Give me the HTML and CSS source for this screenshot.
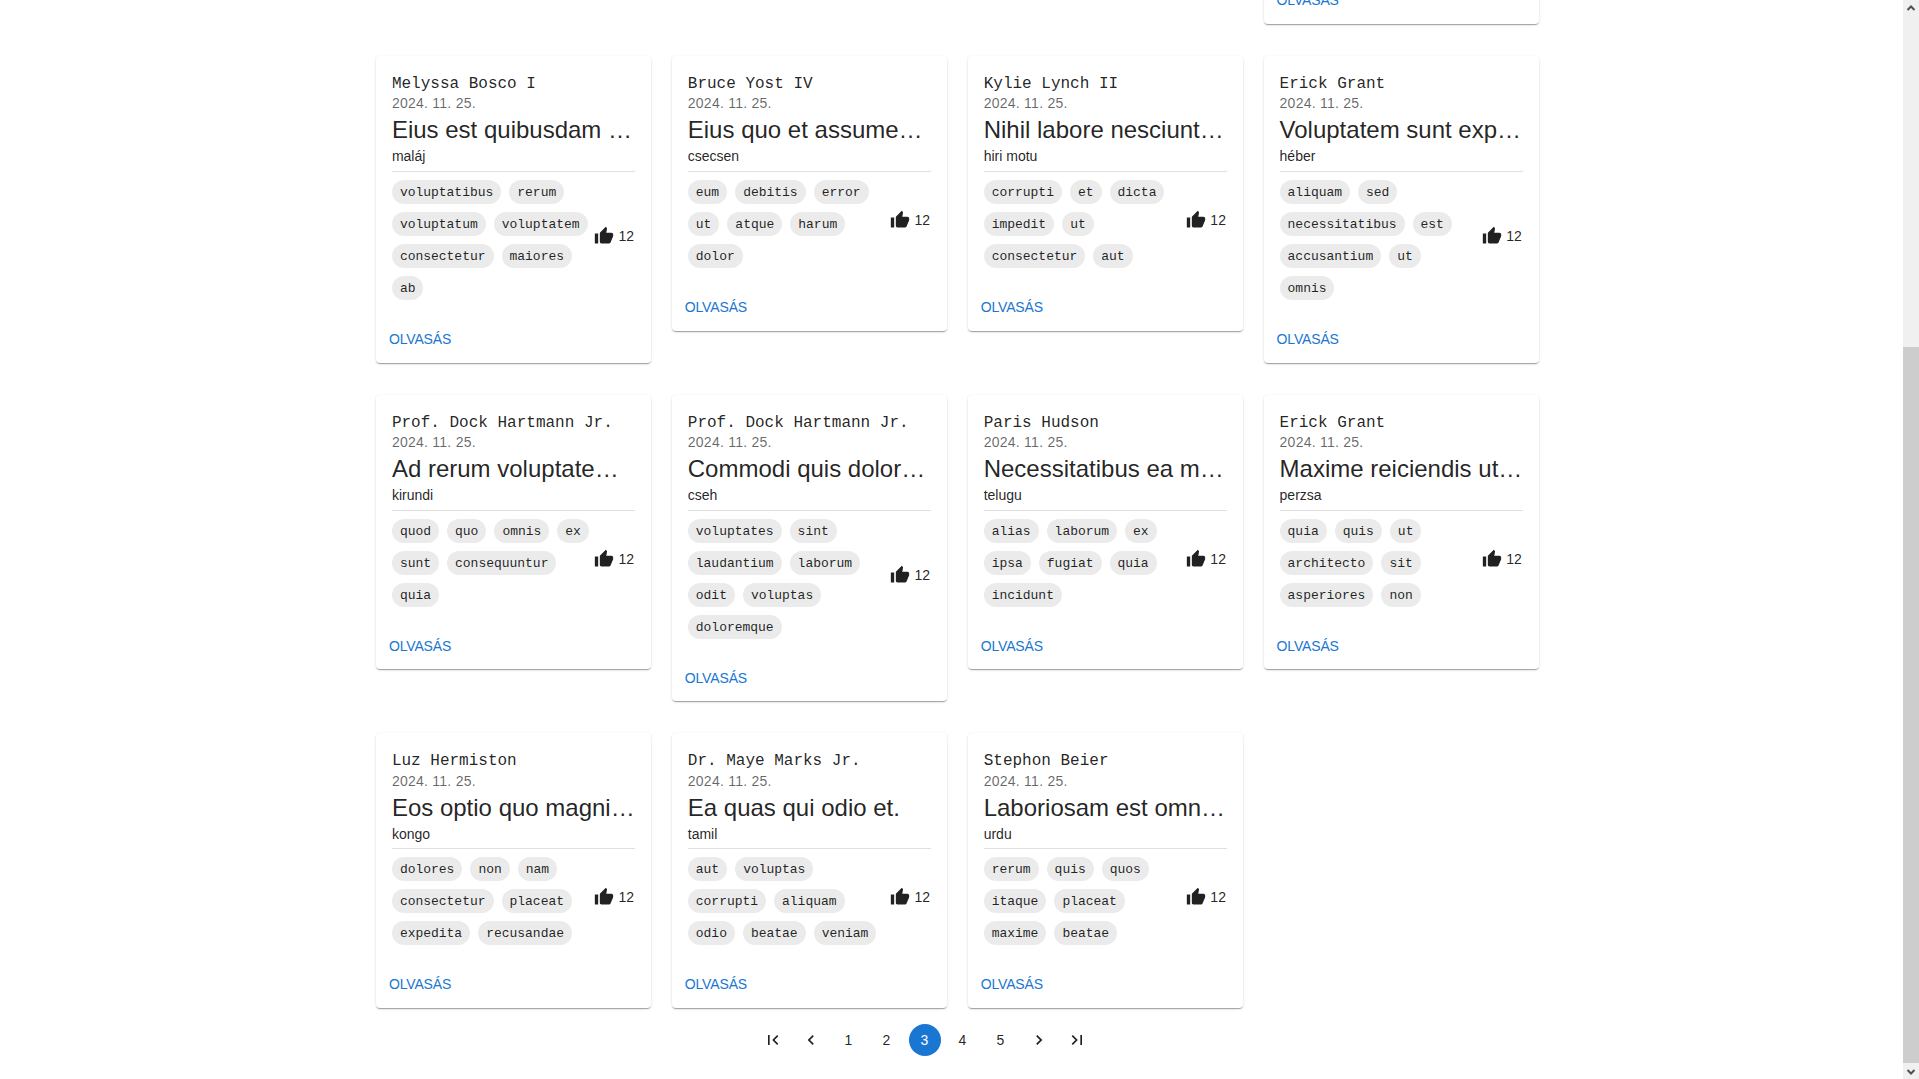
FILE: index.html
```html
<!DOCTYPE html>
<html lang="hu">
<head>
<meta charset="utf-8">
<title>Bejegyzések</title>
<link rel="stylesheet" href="styles.css">
</head>
<body>
<svg class="sprite" aria-hidden="true">
<symbol id="thumb" viewBox="0 0 24 24"><path d="M1 21h4V9H1v12zm22-11c0-1.1-.9-2-2-2h-6.31l.95-4.57.03-.32c0-.41-.17-.79-.44-1.06L14.17 1 7.59 7.59C7.22 7.95 7 8.45 7 9v10c0 1.1.9 2 2 2h9c.83 0 1.54-.5 1.84-1.22l3.02-7.05c.09-.23.14-.47.14-.73v-2z"/></symbol>
</svg>
<div class="window">
<main class="page">
<div class="grid">
<article class="card last-column"><div class="actions"><a class="read">OLVASÁS</a></div></article>

<article class="card"><div class="content"><div class="author">Melyssa Bosco I</div><div class="date">2024. 11. 25.</div><h2 class="title">Eius est quibusdam …</h2><div class="language">maláj</div>
<div class="meta"><div class="chips"><span class="chip">voluptatibus</span><span class="chip">rerum</span><span class="chip">voluptatum</span><span class="chip">voluptatem</span><span class="chip">consectetur</span><span class="chip">maiores</span><span class="chip">ab</span></div><div class="likes"><svg class="icon"><use href="#thumb"/></svg><span>12</span></div></div></div><div class="actions"><a class="read">OLVASÁS</a></div></article>

<article class="card"><div class="content"><div class="author">Bruce Yost IV</div><div class="date">2024. 11. 25.</div><h2 class="title">Eius quo et assume…</h2><div class="language">csecsen</div>
<div class="meta"><div class="chips"><span class="chip">eum</span><span class="chip">debitis</span><span class="chip">error</span><span class="chip">ut</span><span class="chip">atque</span><span class="chip">harum</span><span class="chip">dolor</span></div><div class="likes"><svg class="icon"><use href="#thumb"/></svg><span>12</span></div></div></div><div class="actions"><a class="read">OLVASÁS</a></div></article>

<article class="card"><div class="content"><div class="author">Kylie Lynch II</div><div class="date">2024. 11. 25.</div><h2 class="title">Nihil labore nesciunt…</h2><div class="language">hiri motu</div>
<div class="meta"><div class="chips"><span class="chip">corrupti</span><span class="chip">et</span><span class="chip">dicta</span><span class="chip">impedit</span><span class="chip">ut</span><span class="chip">consectetur</span><span class="chip">aut</span></div><div class="likes"><svg class="icon"><use href="#thumb"/></svg><span>12</span></div></div></div><div class="actions"><a class="read">OLVASÁS</a></div></article>

<article class="card"><div class="content"><div class="author">Erick Grant</div><div class="date">2024. 11. 25.</div><h2 class="title">Voluptatem sunt exp…</h2><div class="language">héber</div>
<div class="meta"><div class="chips"><span class="chip">aliquam</span><span class="chip">sed</span><span class="chip">necessitatibus</span><span class="chip">est</span><span class="chip">accusantium</span><span class="chip">ut</span><span class="chip">omnis</span></div><div class="likes"><svg class="icon"><use href="#thumb"/></svg><span>12</span></div></div></div><div class="actions"><a class="read">OLVASÁS</a></div></article>

<article class="card"><div class="content"><div class="author">Prof. Dock Hartmann Jr.</div><div class="date">2024. 11. 25.</div><h2 class="title">Ad rerum voluptate…</h2><div class="language">kirundi</div>
<div class="meta"><div class="chips"><span class="chip">quod</span><span class="chip">quo</span><span class="chip">omnis</span><span class="chip">ex</span><span class="chip">sunt</span><span class="chip">consequuntur</span><span class="chip">quia</span></div><div class="likes"><svg class="icon"><use href="#thumb"/></svg><span>12</span></div></div></div><div class="actions"><a class="read">OLVASÁS</a></div></article>

<article class="card"><div class="content"><div class="author">Prof. Dock Hartmann Jr.</div><div class="date">2024. 11. 25.</div><h2 class="title">Commodi quis dolor…</h2><div class="language">cseh</div>
<div class="meta"><div class="chips"><span class="chip">voluptates</span><span class="chip">sint</span><span class="chip">laudantium</span><span class="chip">laborum</span><span class="chip">odit</span><span class="chip">voluptas</span><span class="chip">doloremque</span></div><div class="likes"><svg class="icon"><use href="#thumb"/></svg><span>12</span></div></div></div><div class="actions"><a class="read">OLVASÁS</a></div></article>

<article class="card"><div class="content"><div class="author">Paris Hudson</div><div class="date">2024. 11. 25.</div><h2 class="title">Necessitatibus ea m…</h2><div class="language">telugu</div>
<div class="meta"><div class="chips"><span class="chip">alias</span><span class="chip">laborum</span><span class="chip">ex</span><span class="chip">ipsa</span><span class="chip">fugiat</span><span class="chip">quia</span><span class="chip">incidunt</span></div><div class="likes"><svg class="icon"><use href="#thumb"/></svg><span>12</span></div></div></div><div class="actions"><a class="read">OLVASÁS</a></div></article>

<article class="card"><div class="content"><div class="author">Erick Grant</div><div class="date">2024. 11. 25.</div><h2 class="title">Maxime reiciendis ut…</h2><div class="language">perzsa</div>
<div class="meta"><div class="chips"><span class="chip">quia</span><span class="chip">quis</span><span class="chip">ut</span><span class="chip">architecto</span><span class="chip">sit</span><span class="chip">asperiores</span><span class="chip">non</span></div><div class="likes"><svg class="icon"><use href="#thumb"/></svg><span>12</span></div></div></div><div class="actions"><a class="read">OLVASÁS</a></div></article>

<article class="card"><div class="content"><div class="author">Luz Hermiston</div><div class="date">2024. 11. 25.</div><h2 class="title">Eos optio quo magni…</h2><div class="language">kongo</div>
<div class="meta"><div class="chips"><span class="chip">dolores</span><span class="chip">non</span><span class="chip">nam</span><span class="chip">consectetur</span><span class="chip">placeat</span><span class="chip">expedita</span><span class="chip">recusandae</span></div><div class="likes"><svg class="icon"><use href="#thumb"/></svg><span>12</span></div></div></div><div class="actions"><a class="read">OLVASÁS</a></div></article>

<article class="card"><div class="content"><div class="author">Dr. Maye Marks Jr.</div><div class="date">2024. 11. 25.</div><h2 class="title">Ea quas qui odio et.</h2><div class="language">tamil</div>
<div class="meta"><div class="chips"><span class="chip">aut</span><span class="chip">voluptas</span><span class="chip">corrupti</span><span class="chip">aliquam</span><span class="chip">odio</span><span class="chip">beatae</span><span class="chip">veniam</span></div><div class="likes"><svg class="icon"><use href="#thumb"/></svg><span>12</span></div></div></div><div class="actions"><a class="read">OLVASÁS</a></div></article>

<article class="card"><div class="content"><div class="author">Stephon Beier</div><div class="date">2024. 11. 25.</div><h2 class="title">Laboriosam est omn…</h2><div class="language">urdu</div>
<div class="meta"><div class="chips"><span class="chip">rerum</span><span class="chip">quis</span><span class="chip">quos</span><span class="chip">itaque</span><span class="chip">placeat</span><span class="chip">maxime</span><span class="chip">beatae</span></div><div class="likes"><svg class="icon"><use href="#thumb"/></svg><span>12</span></div></div></div><div class="actions"><a class="read">OLVASÁS</a></div></article>
</div>

<nav class="pagination">
<span class="page-item"><svg class="icon" viewBox="0 0 24 24"><path d="M18.41 16.59L13.82 12l4.59-4.59L17 6l-6 6 6 6zM6 6h2v12H6z"/></svg></span>
<span class="page-item"><svg class="icon" viewBox="0 0 24 24"><path d="M15.41 7.41L14 6l-6 6 6 6 1.41-1.41L10.83 12z"/></svg></span>
<span class="page-item">1</span>
<span class="page-item">2</span>
<span class="page-item current">3</span>
<span class="page-item">4</span>
<span class="page-item">5</span>
<span class="page-item"><svg class="icon" viewBox="0 0 24 24"><path d="M10 6L8.59 7.41 13.17 12l-4.58 4.59L10 18l6-6z"/></svg></span>
<span class="page-item"><svg class="icon" viewBox="0 0 24 24"><path d="M5.59 7.41L10.18 12l-4.59 4.59L7 18l6-6-6-6zM16 6h2v12h-2z"/></svg></span>
</nav>
</main>
<div class="scrollbar">
<svg class="arrow" viewBox="0 0 16 16"><path d="M4.5 10L8 6.5l3.5 3.5"/></svg>
<div class="thumb"></div>
<svg class="arrow" viewBox="0 0 16 16"><path d="M4.5 7L8 10.500 11.500 7"/></svg>
</div>
</div>
</body>
</html>
```
FILE: styles.css
```css
* { box-sizing: border-box; }
body {
  margin: 0;
  overflow: hidden;
  background: #fff;
  color: rgba(0, 0, 0, 0.87);
  font-family: "Liberation Sans", Arial, sans-serif;
  font-size: 14px;
}
.sprite { display: none; }
.window { display: flex; height: 100vh; overflow: hidden; }
.page { flex: 1; min-width: 0; overflow: hidden; }

.grid {
  display: grid;
  grid-template-columns: repeat(4, 275.25px);
  column-gap: 20.65px;
  row-gap: 32px;
  align-items: start;
  margin-top: -22.8px;
  padding-left: 375.9px;
}
.card {
  border-radius: 4px;
  background: #fff;
  box-shadow: 0 2px 1px -1px rgba(0, 0, 0, 0.2), 0 1px 1px rgba(0, 0, 0, 0.14), 0 1px 3px rgba(0, 0, 0, 0.12);
}
.last-column { grid-column: 4; }
.content { padding: 16px; }
.author {
  height: 21.1px;
  line-height: 24px;
  font-family: "Liberation Mono", monospace;
  font-size: 16px;
  white-space: nowrap;
}
.date {
  height: 20px;
  line-height: 20px;
  color: rgba(0, 0, 0, 0.6);
  letter-spacing: 0.25px;
}
.title {
  margin: 0;
  height: 32px;
  line-height: 34.6px;
  font-size: 24px;
  font-weight: 400;
  white-space: nowrap;
}
.language { height: 26.9px; line-height: 22px; }
.meta {
  display: flex;
  align-items: center;
  justify-content: space-between;
  border-top: 1px solid rgba(0, 0, 0, 0.12);
  margin-top: -1px;
}
.chips {
  display: flex;
  flex-wrap: wrap;
  gap: 8px;
  width: 202px;
  padding-top: 8px;
}
.chip {
  height: 24px;
  padding: 0 8px;
  border-radius: 12px;
  background: #ebebeb;
  font-family: "Liberation Mono", monospace;
  font-size: 13px;
  letter-spacing: -0.02px;
  line-height: 26.6px;
}
.likes { display: flex; align-items: center; gap: 4.4px; padding-right: 1px; }
.icon { display: block; width: 20px; height: 20px; fill: currentColor; }
.actions { display: flex; padding: 8px; }
.read {
  padding: 4px 5px;
  color: #1976d2;
  font-size: 14px;
  letter-spacing: -0.15px;
  line-height: 22.75px;
}

.pagination { display: flex; gap: 6px; padding: 16px 0 0 756.5px; }
.page-item {
  display: flex;
  align-items: center;
  justify-content: center;
  width: 32px;
  height: 32px;
  border-radius: 50%;
}
.current { background: #1976d2; color: #fff; }

.scrollbar {
  display: flex;
  flex-direction: column;
  width: 16px;
  background: #f0f0f0;
}
.arrow { width: 16px; height: 16px; fill: none; stroke: #505050; stroke-width: 2; }
.thumb { height: 716px; margin-top: 331px; background: #cdcdcd; }
```
